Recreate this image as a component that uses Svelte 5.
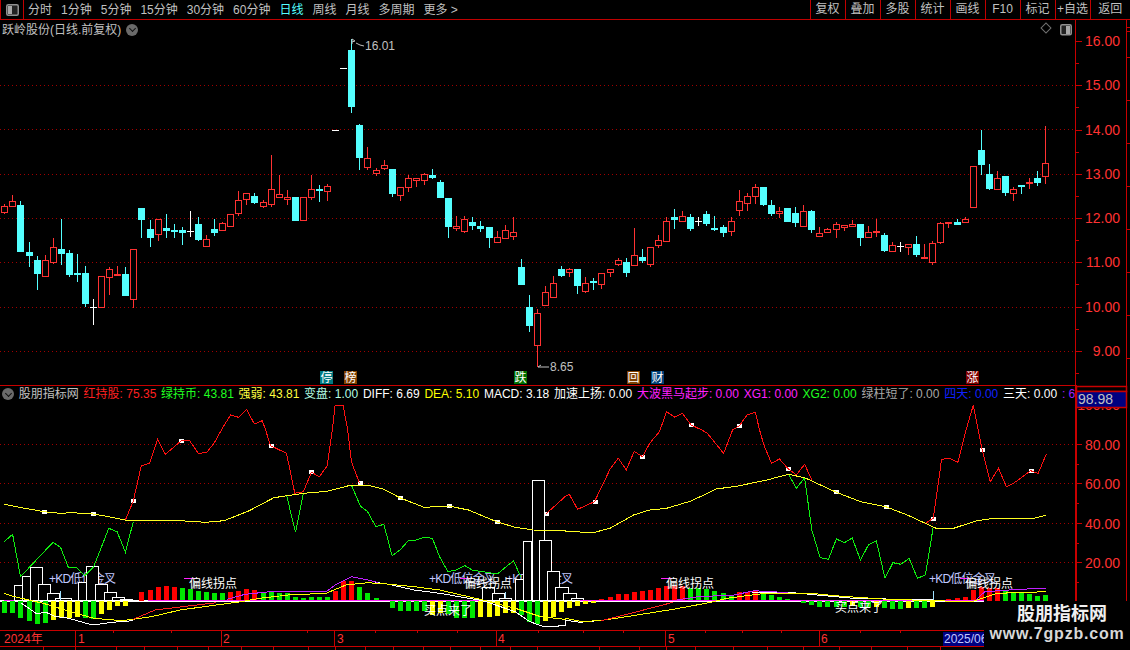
<script>
  const tabs = ['分时', '1分钟', '5分钟', '15分钟', '30分钟', '60分钟', '日线', '周线', '月线', '多周期', '更多 >'];
  const tools = ['复权', '叠加', '多股', '统计', '画线', 'F10', '标记', '+自选', '返回'];

  const legend = [
    ['红持股: 75.35', '#ff2020'], ['绿持币: 43.81', '#20ff20'], ['强弱: 43.81', '#ffff40'], ['变盘: 1.00', '#b4ffe4'],
    ['DIFF: 6.69', '#ffffff'], ['DEA: 5.10', '#ffff00'], ['MACD: 3.18', '#ffffff'], ['加速上扬: 0.00', '#ffffff'],
    ['大波黑马起步: 0.00', '#ff20ff'], ['XG1: 0.00', '#ff20ff'], ['XG2: 0.00', '#20ff20'], ['绿柱短了: 0.00', '#a8a8a8'],
    ['四天: 0.00', '#1020ff'], ['三天: 0.00', '#ffffff'], [': 6.', '#a020ff']
  ];

  // type, body top, body bottom, high, low (page pixels)
  const k = [
    'r 206 212 204 213', 'r 201 206 195 206', 'c 205 251 201 251', 'c 252 255 242 266', 'c 260 273 256 289',
    'r 260 276 255 276', 'r 247 262 238 263', 'c 249 253 219 264', 'c 253 274 250 276', 'c 273 274 254 281',
    'c 273 303 266 306', 'w 307 307 299 324', 'r 276 307 276 307', 'r 269 277 267 294', 'r 274 275 266 275',
    'c 274 295 267 295', 'r 249 299 249 307', 'c 208 219 208 237', 'c 229 237 220 246', 'r 219 234 219 240',
    'c 228 230 214 237', 'c 230 231 224 237', 'c 230 232 227 244', 'w 231 231 211 236', 'c 224 239 217 240',
    'r 239 246 235 246', 'c 229 232 219 235', 'r 223 230 222 230', 'r 214 226 214 226', 'r 200 213 191 215',
    'r 193 199 193 204', 'c 196 202 193 203', 'r 202 206 200 207', 'r 189 204 155 206', 'r 194 197 175 197',
    'r 197 199 190 204', 'c 197 220 197 220', 'r 197 220 197 220', 'r 189 197 175 199', 'c 189 189 185 201',
    'r 186 191 184 200', 'w 130 130 130 130', 'w 68 68 68 68', 'c 50 106 39 112', 'c 125 157 124 169',
    'r 158 167 147 169', 'r 170 173 168 175', 'r 165 168 160 169', 'c 169 193 169 196', 'r 187 195 187 200',
    'r 178 187 175 191', 'r 178 180 178 186', 'r 174 180 173 184', 'c 175 177 169 178', 'c 182 197 180 197',
    'c 198 226 198 237', 'r 226 228 216 230', 'r 219 231 216 232', 'c 222 225 217 229', 'c 226 228 221 231',
    'c 227 237 227 247', 'r 237 242 231 242', 'r 230 238 225 238', 'r 232 236 217 239', 'c 267 284 259 284',
    'c 307 325 295 331', 'r 313 345 309 366', 'r 292 305 286 305', 'r 283 297 276 297', 'c 269 275 266 276',
    'r 269 272 268 276', 'c 269 285 269 293', 'r 283 291 277 292', 'c 281 282 278 289', 'r 273 284 273 288',
    'r 269 272 269 276', 'r 260 264 258 265', 'c 262 272 258 276', 'r 255 265 228 265', 'c 257 260 249 262',
    'r 247 264 247 266', 'r 240 245 235 247', 'r 221 241 217 241', 'c 217 219 209 228', 'r 216 221 211 221',
    'c 217 228 214 230', 'w 221 221 217 225', 'c 214 223 211 225', 'c 228 229 216 230', 'c 227 232 225 236',
    'r 221 231 217 235', 'r 201 210 190 215', 'r 196 203 193 210', 'r 187 196 184 203', 'c 187 204 187 205',
    'c 205 213 200 215', 'r 211 213 207 217', 'c 208 221 208 221', 'c 213 222 207 226', 'r 211 226 205 226',
    'c 211 229 210 232', 'r 233 236 227 236', 'r 229 232 228 232', 'r 224 229 222 237', 'r 225 227 225 230',
    'r 224 226 220 226', 'c 224 237 224 245', 'r 232 237 226 237', 'r 231 232 219 236', 'c 235 250 233 251',
    'r 245 251 242 251', 'w 246 246 242 251', 'r 244 247 244 254', 'c 244 254 236 256', 'r 257 258 244 258',
    'r 243 262 241 264', 'r 223 242 222 243', 'r 222 223 222 227', 'c 222 224 219 224', 'r 219 222 217 222',
    'r 166 207 166 207', 'c 150 164 130 174', 'c 174 188 164 189', 'r 178 189 171 189', 'c 176 192 176 195',
    'r 189 193 187 200', 'c 185 186 185 193', 'r 182 183 178 188', 'c 178 182 171 185', 'r 163 176 126 183'
  ];
  const cx = (i) => Math.round(4.3 + 8.07 * i) + 0.5;
  const candles = k.map((s, i) => {
    const [t, top, bottom, hi, lo] = s.split(' ');
    return { t, x: cx(i), top: +top, bottom: +bottom, hi: +hi, lo: +lo };
  });
  const candleColor = { r: '#ff3232', c: '#54ffff', w: '#ffffff' };

  // indicator values were read off 3x crops: helpers bring them back to page pixels
  const L = (x, y) => [x / 2.775, 430 + y / 3];
  const R = (x, y) => [565 + x / 2.775, 430 + y / 3];
  const line = (f, p) => {
    let out = [];
    for (let i = 0; i < p.length; i += 2) out.push(f(p[i], p[i + 1]).map((v) => v.toFixed(1)).join(','));
    return out.join(' ');
  };

  const reds = [
    line(L, [348,270,370,213,392,107,415,100,437,28,459,73,503,32,525,30,550,70,573,68,595,38,617,-5,640,-45,662,-38,684,-62,706,-18,728,-28,737,0,751,47,795,70,818,190,842,185,864,127,886,140,908,108,922,0,930,-74,952,-74,965,0,975,95,998,160]),
    line(L, [1515,252,1568,200]),
    line(R, [0,200,12,193,35,238,82,215,125,118,148,85,170,120,192,64,215,80,235,40,262,5,282,-55,304,-39,326,-50,350,-15,380,0,395,10,440,70,465,0,484,-13,505,-45,528,-53,540,0,552,45,573,100,595,87,620,117,642,135,665,103,685,150]),
    line(R, [1000,280,1022,265,1045,88,1067,85,1090,97,1113,0,1133,-75,1147,0,1158,60,1180,155,1203,115,1225,170,1247,158,1292,122,1313,130,1336,72])
  ];
  const greens = [
    line(L, [12,335,35,313,57,440,147,337,168,352,190,413,213,413,235,437,260,410,302,295,325,305,348,367,370,275]),
    line(L, [795,195,820,307,842,190]),
    line(L, [975,165,1000,228,1020,245,1043,290,1065,283,1088,377,1110,360,1133,332,1155,330,1178,322,1200,325,1220,380,1243,425,1265,420,1290,407,1310,420,1380,432,1425,392,1445,440]),
    line(R, [620,132,642,175,665,143,685,300,708,383,731,388,753,327,775,338,797,324,820,390,842,345,864,333,888,445,910,398,932,403,955,385,978,445,1000,435,1022,290])
  ];
  const yellowMid =
    line(L, [12,223,60,233,123,245,165,250,200,248,257,252,302,260,348,270,370,273,500,272,570,277,622,272,690,243,760,203,842,190,908,184,975,165,1020,165,1065,178,1111,204,1177,232,1245,228,1300,240,1380,276,1430,292,1480,300,1568,303]) + ' ' +
    line(R, [0,305,82,307,125,295,190,255,235,240,282,235,350,213,420,177,480,168,560,150,620,133,665,143,753,187,820,215,890,230,950,255,1000,280,1030,295,1075,296,1140,273,1190,265,1300,265,1336,256]);

  const macdYellow =
    line(L, [12,490,40,500,120,520,180,540,260,565,340,572,420,560,500,540,600,525,670,515,720,505,800,495,905,490,960,465,1020,458,1075,462,1150,470,1220,480,1340,510,1430,535,1500,560,1568,568]) + ' ' +
    line(R, [0,565,50,575,110,570,200,555,300,538,400,518,450,505,540,492,680,490,760,498,880,507,1020,512,1130,515,1200,490,1336,485]);
  const macdWhite = [
    line(L, [60,520,100,550,130,548,150,558,190,565,257,585,310,577,370,572]),
    line(L, [1040,457,1075,462,1150,480,1220,490,1340,512,1430,545,1470,575,1510,590,1568,587]) + ' ' + line(R, [0,570,40,577,90,572]),
    line(R, [520,487,620,487,700,495,800,505,1020,510])
  ];
  const macdRed = [
    line(L, [370,568,430,540,600,518]),
    line(R, [100,572,200,545,300,517])
  ];
  const macdPurple = [
    line(L, [630,508,680,493,750,485,905,485,930,465,975,440,1020,450,1050,458]),
    line(R, [310,510,370,500,470,495,525,482,620,488]),
    line(R, [1140,510,1165,485,1260,478,1336,475])
  ];

  const dots = [
    L(123,245), L(257,252), L(370,213), L(503,32), L(751,47), L(864,127), L(998,160), L(1111,204), L(1245,228), L(1380,276), L(1515,252),
    R(82,215), R(215,80), R(350,-15), R(484,-13), R(620,117), R(753,187), R(890,230), R(1022,267), R(1158,60), R(1292,122)
  ];

  // MACD columns: colour + top or bottom of the column in the crop
  const col =
    'g548 g548 g563 g573 g582 g578 y569 y563 y563 y560 g565 g567 y552 y540 y528 y528 x0 r486 r480 r471 r468 r471 g474 g476 g484 g486 g490 g488 r486 r482 r477 r480 g485 g485 g488 g490 g502 g504 g502 g502 g502 r484 r453 r453 g472 g489 g504 x0 g533 g543 g543 g543 g543 y555 y550 g553 g563 g563 g563 y560 y560 y557 y550 y548 g556 g575 g582 y572 y560 y545 y534 y527 y522 y518 r508 r501 r491 r491 r485 r483 r480 r473 r468 r468 r468 g473 g475 g477 g483 g490 g498 r485 r485 r483 g486 g495 g502 g508 x0 g519 g526 g531 g531 g532 g530 y527 g530 g530 y531 g534 g537 g537 y534 g534 g533 y530 r510 r508 r505 r502 r480 r470 r474 r475 g483 g485 g489 g492 g498 g495'.split(' ');
  const colColor = { g: '#00e800', y: '#ffff00', r: '#ff0000' };
  const bars = col
    .map((s, i) => {
      const y = 430 + +s.slice(1) / 3;
      return { c: colColor[s[0]], x: cx(i) - 2.5, y: Math.min(y, 601), h: Math.abs(y - 601) };
    })
    .filter((b) => b.c);

  // hollow white columns, drawn filled so they hide the label behind them
  const boxes = [
    L(40,466).concat(L(62,513)), L(62,438).concat(L(84,513)), L(84,412).concat(L(118,513)), L(106,463).concat(L(140,513)),
    L(130,488).concat(L(163,513)), L(152,503).concat(L(196,513)), L(174,510).concat(L(217,513)), L(217,455).concat(L(240,513)),
    L(240,409).concat(L(274,513)), L(264,461).concat(L(298,513)), L(288,487).concat(L(322,513)), L(310,500).concat(L(344,513)),
    L(332,508).concat(L(366,513)),
    L(1338,472).concat(L(1372,513)), L(1364,490).concat(L(1398,513)), L(1386,503).concat(L(1420,513)), L(1408,510).concat(L(1452,513)),
    L(1430,448).concat(L(1452,513)), L(1452,332).concat(L(1475,513)), L(1475,151).concat(L(1509,513)), L(1497,331).concat(L(1531,513)),
    L(1519,424).concat(L(1553,513)), L(1541,470).concat(R(8,513)), R(-5,490).concat(R(30,513)), R(18,503).concat(R(52,513)), R(40,510).concat(R(120,513))
  ].map(([a, b, c, d]) => ({ x: Math.round(a) + 0.5, y: Math.round(b) + 0.5, w: Math.round(c - a), h: Math.round(d - b) }));

  const priceGrid = [85.5, 129.5, 174.5, 218.5, 262.5, 307.5, 351.5];
  const prices = [['16.00', 41], ['15.00', 85], ['14.00', 130], ['13.00', 174], ['12.00', 218], ['11.00', 262], ['10.00', 307], ['9.00', 351]];
  const rates = [['80.00', 444.5], ['60.00', 483.5], ['40.00', 523.5], ['20.00', 562.5]];
  const flags = [
    ['停', 320, '#007880'], ['榜', 344, '#804000'], ['跌', 514, '#007000'], ['回', 627, '#804000'], ['财', 651, '#004078'], ['涨', 966, '#800000']
  ];
  const kd = [49, 429, 506, 929];
  const turn = [189, 464, 666, 965];
  const buy = [[424, 610], [835, 607]];
  const hooks = [[184, 196], [460, 471], [661, 672], [960, 971]];

  const months = [[78, '1', 75], [223, '2', 221], [337, '3', 334], [498, '4', 496], [668, '5', 665], [821, '6', 819]];
  const topTicks = [113, 171, 307, 375, 417, 457, 538, 583, 623, 705, 742, 781, 860, 900];
  const lowTicks = [43, 75, 116, 144, 177, 208, 241, 273, 308, 335, 365, 393, 423, 450, 480, 510, 537, 599, 639, 666, 695, 733, 767, 803, 839, 871, 907, 940];
  const edgeTicks = [27, 31, 57, 100, 143, 186, 229, 272, 315, 358];
</script>

<div class="app">
  <header class="toolbar">
    <div class="corner">
      <svg width="13" height="12" viewBox="0 0 13 12">
        <rect x="0.75" y="0.75" width="11.5" height="10.5" rx="1.5" fill="#222" stroke="#909090" stroke-width="1.5" />
        <rect x="2" y="2" width="4" height="8" fill="#a8a8a8" />
      </svg>
    </div>
    <nav class="tabs">
      {#each tabs as t}
        <span class:on={t === '日线'}>{t}</span>
      {/each}
    </nav>
    <div class="tools">
      {#each tools as t}
        <span>{t}</span>
      {/each}
    </div>
  </header>

  <section class="pane price">
    <div class="title">
      <span>跃岭股份(日线.前复权)</span>
      <i class="more"></i>
    </div>
    <svg class="plot" width="1075" height="365" viewBox="0 20 1075 365">
      {#each priceGrid as y}
        <line class="grid" x1="0" x2="1075" y1={y} y2={y} />
      {/each}

      {#each candles as c}
        <line class="edge" x1={c.x} x2={c.x} y1={c.hi} y2={c.lo + 1} stroke={candleColor[c.t]} />
        {#if c.t === 'w'}
          <line class="edge" x1={c.x - 3.5} x2={c.x + 3.5} y1={c.top + 0.5} y2={c.top + 0.5} stroke="#fff" />
        {:else if c.t === 'r'}
          <rect class="edge" x={c.x - 3} y={c.top + 0.5} width="6" height={Math.max(c.bottom - c.top, 1)} fill="#000" stroke={candleColor.r} />
        {:else}
          <rect class="edge" x={c.x - 3.5} y={c.top} width="7" height={Math.max(c.bottom - c.top, 1) + 1} fill={candleColor.c} />
        {/if}
      {/each}

      <polyline class="note-line" points="352,44 352,39 355,41 352,42" />
      <polyline class="note-line" points="356,43 360,45 364,46" />
      <text class="note" x="365" y="50">16.01</text>
      <polyline class="note-line" points="549,367 538,367 541,365" />
      <text class="note" x="550" y="371">8.65</text>

      <rect x="1042.5" y="24.5" width="7" height="7" transform="rotate(45 1046 28)" fill="none" stroke="#707070" />
      <rect x="1060.75" y="24.75" width="10.5" height="10" rx="1.5" fill="#222" stroke="#909090" stroke-width="1.5" />
      <rect x="1066" y="26" width="4" height="8" fill="#a8a8a8" />

      {#each flags as [text, x, bg]}
        <rect x={x} y="371" width="13" height="13" fill={bg} />
        <text class="flag" x={x + 0.5} y="382">{text}</text>
      {/each}
    </svg>
    <svg class="axis" width="55" height="365" viewBox="1075 20 55 365">
      <line class="red" x1="1075.5" x2="1075.5" y1="20" y2="385" />
      <line class="red" x1="1126.5" x2="1126.5" y1="20" y2="385" />
      {#each edgeTicks as y}
        <line class="red" x1="1126" x2="1130" y1={y + 0.5} y2={y + 0.5} />
      {/each}
      {#each prices as [label, y]}
        <line class="red" x1="1075" x2="1082" y1={y + 0.5} y2={y + 0.5} />
        <line class="red" x1="1075" x2="1079" y1={y + 22.5} y2={y + 22.5} />
        <text class="tick" x="1120" y={y + 5}>{label}</text>
      {/each}
    </svg>
  </section>

  <section class="pane rate">
    <div class="column">
      <div class="legend">
        <i class="more"></i>
        <span class="name">股朋指标网</span>
        {#each legend as [text, color]}
          <span style:color>{text}</span>
        {/each}
      </div>
      <svg class="plot" width="1075" height="228" viewBox="0 402 1075 228">
        {#each rates as [, y]}
          <line class="grid" x1="0" x2="1075" y1={y} y2={y} />
        {/each}

        {#each kd as x}
          <text class="kd" x={x} y="583">+KD低位金叉</text>
        {/each}

        {#each boxes as b}
          <rect class="edge" x={b.x} y={b.y} width={b.w} height={b.h} fill="#000" stroke="#fff" />
        {/each}

        <line class="edge" x1="0" x2="984" y1="601" y2="601" stroke="#fff" stroke-width="2" />
        {#each bars as b}
          <rect class="edge" x={b.x} y={b.y} width="5" height={b.h} fill={b.c} />
        {/each}
        <line class="edge" x1="4" x2="14" y1="600.5" y2="600.5" stroke="#ff20ff" stroke-width="1.5" />
        <line class="edge" x1="148" x2="483" y1="600.5" y2="600.5" stroke="#ff20ff" stroke-width="1.5" />
        <line class="edge" x1="580" x2="984" y1="600.5" y2="600.5" stroke="#ff20ff" stroke-width="1.5" />

        {#each macdWhite as points}
          <polyline class="edge" {points} stroke="#fff" />
        {/each}
        <polyline class="edge" points={macdYellow} stroke="#ffff00" />
        {#each macdRed as points}
          <polyline class="edge" {points} stroke="#ff2020" />
        {/each}
        {#each macdPurple as points}
          <polyline class="edge" {points} stroke="#c020ff" />
        {/each}

        {#each dots as [x, y]}
          <rect class="edge" x={Math.round(x) - 2} y={Math.round(y) - 2} width="5" height="4" fill="#fff" />
        {/each}

        {#each reds as points}
          <polyline class="edge" {points} stroke="#ff1010" />
        {/each}
        {#each greens as points}
          <polyline class="edge" {points} stroke="#10f010" />
        {/each}
        <polyline class="edge" points={yellowMid} stroke="#ffff20" />

        {#each hooks as [a, b]}
          <line class="edge" x1={a} x2={b} y1="578.5" y2="578.5" stroke="#ff20ff" />
        {/each}
        {#each turn as x}
          <text class="label" x={x} y="588">偏线拐点</text>
        {/each}
        {#each buy as [x, y]}
          <text class="label" x={x} y={y + 5}>买点来了</text>
        {/each}
        <line class="edge" x1="60.5" x2="60.5" y1="591" y2="600" stroke="#a0e0ff" />
        <line class="edge" x1="505.5" x2="505.5" y1="592" y2="598" stroke="#a0e0ff" />
        <line class="edge" x1="933.5" x2="933.5" y1="591" y2="600" stroke="#a0e0ff" />
      </svg>
    </div>
    <svg class="axis" width="55" height="245" viewBox="1075 385 55 245">
      <line class="red thick" x1="1076" x2="1076" y1="385" y2="630" />
      <line class="red" x1="1126.5" x2="1126.5" y1="385" y2="630" />
      <text class="tick" x="1120" y="410">100.00</text>
      <rect class="value" x="1076.5" y="386.5" width="50" height="5" fill="#000" />
      <rect class="value" x="1076.5" y="391.5" width="50" height="16" fill="#000080" />
      <text class="value-text" x="1078" y="404">98.98</text>
      {#each rates as [label, y]}
        <line class="red" x1="1075" x2="1082" y1={y} y2={y} />
        <line class="red" x1="1075" x2="1079" y1={y + 20} y2={y + 20} />
        <text class="tick" x="1120" y={y + 5}>{label}</text>
      {/each}
    </svg>
  </section>

  <footer class="time">
    <svg width="1130" height="20" viewBox="0 630 1130 20">
      <line class="red" x1="0" x2="1130" y1="630.5" y2="630.5" />
      <line class="red" x1="0" x2="1130" y1="646.5" y2="646.5" />
      {#each topTicks as x}
        <line class="red" x1={x + 0.5} x2={x + 0.5} y1="630" y2="633" />
      {/each}
      {#each lowTicks as x}
        <line class="red" x1={x + 0.5} x2={x + 0.5} y1="646" y2="650" />
      {/each}
      <text class="month" x="4" y="643">2024年</text>
      {#each months as [x, label, bar]}
        <line class="red" x1={bar + 0.5} x2={bar + 0.5} y1="630" y2="646" />
        <text class="month" x={x} y="643">{label}</text>
      {/each}
      <rect x="943" y="632" width="42" height="14" fill="#000080" />
      <text class="now" x="944" y="643">2025/06</text>
    </svg>
  </footer>

  <aside class="stamp">
    <strong>股朋指标网</strong>
    <b>www.7gpzb.com</b>
  </aside>
</div>

<style>
  :global(body) {
    background: #000;
  }
  .app {
    position: relative;
    width: 1130px;
    height: 650px;
    overflow: hidden;
    background: #000;
    color: #c0c0c0;
    font: 12px/1 "Liberation Sans", "Noto Sans CJK SC", sans-serif;
  }
  svg {
    display: block;
  }
  .toolbar {
    display: flex;
    align-items: center;
    height: 20px;
    box-sizing: border-box;
    border-bottom: 1px solid #c00000;
  }
  .corner {
    display: flex;
    align-items: center;
    justify-content: center;
    box-sizing: border-box;
    width: 24px;
    height: 19px;
    border-left: 1px solid #c00000;
    border-right: 1px solid #c00000;
  }
  .tabs {
    display: flex;
    gap: 9px;
    margin-left: 4px;
    flex: 1;
  }
  .tabs .on {
    color: #54ffff;
  }
  .tools {
    display: flex;
  }
  .tools span {
    box-sizing: border-box;
    width: 35px;
    height: 19px;
    line-height: 19px;
    text-align: center;
    border-left: 1px solid #c00000;
    white-space: nowrap;
  }
  .tools span:last-child {
    width: 40.5px;
  }
  .pane {
    position: relative;
    display: flex;
  }
  .price {
    height: 365px;
  }
  .title {
    position: absolute;
    top: 2px;
    left: 2px;
    display: flex;
    align-items: center;
    gap: 5px;
    height: 15px;
  }
  .more {
    position: relative;
    display: block;
    width: 12px;
    height: 12px;
    border-radius: 50%;
    background: #6a6a6a;
    flex: none;
  }
  .more::after {
    content: "";
    position: absolute;
    left: 3.5px;
    top: 2.5px;
    width: 4px;
    height: 4px;
    border-right: 1px solid #111;
    border-bottom: 1px solid #111;
    transform: rotate(45deg);
  }
  .rate {
    height: 245px;
  }
  .column {
    width: 1075px;
    border-top: 1px solid #c80000;
    box-sizing: border-box;
  }
  .legend {
    display: flex;
    align-items: center;
    gap: 4.8px;
    height: 16px;
    padding-left: 2px;
    white-space: nowrap;
    overflow: hidden;
  }
  .legend .name {
    margin-right: 0;
  }
  .grid {
    stroke: #a00000;
    stroke-dasharray: 1 3;
  }
  .edge {
    shape-rendering: crispEdges;
  }
  polyline.edge {
    fill: none;
  }
  .red {
    stroke: #c80000;
    shape-rendering: crispEdges;
  }
  .thick {
    stroke-width: 2;
  }
  .tick {
    fill: #ff3232;
    font-size: 14px;
    text-anchor: end;
  }
  .value {
    stroke: #c80000;
    stroke-width: 1.5;
  }
  .value-text {
    fill: #c0c0c0;
    font-size: 14px;
  }
  .note {
    fill: #c0c0c0;
    font-size: 12px;
  }
  .note-line {
    fill: none;
    stroke: #c0c0c0;
  }
  .flag {
    fill: #fff;
    font-size: 12px;
  }
  .kd {
    fill: #c0c8ff;
    font-size: 12px;
    letter-spacing: -0.8px;
  }
  .label {
    fill: #ffffff;
    font-size: 12px;
  }
  .month {
    fill: #ff3232;
    font-size: 12px;
  }
  .now {
    fill: #c0c8ff;
    font-size: 12px;
  }
  .time {
    height: 20px;
  }
  .stamp {
    position: absolute;
    left: 984px;
    top: 601px;
    width: 146px;
    height: 49px;
    background: #000;
    display: flex;
    flex-direction: column;
    align-items: center;
    color: #f0f0f0;
    padding-top: 2px;
    box-sizing: border-box;
  }
  .stamp strong {
    font-size: 18px;
    line-height: 22px;
    margin-left: 10px;
  }
  .stamp b {
    font-size: 16px;
    line-height: 18px;
    letter-spacing: 0.8px;
    color: #d8d8d8;
  }
</style>
